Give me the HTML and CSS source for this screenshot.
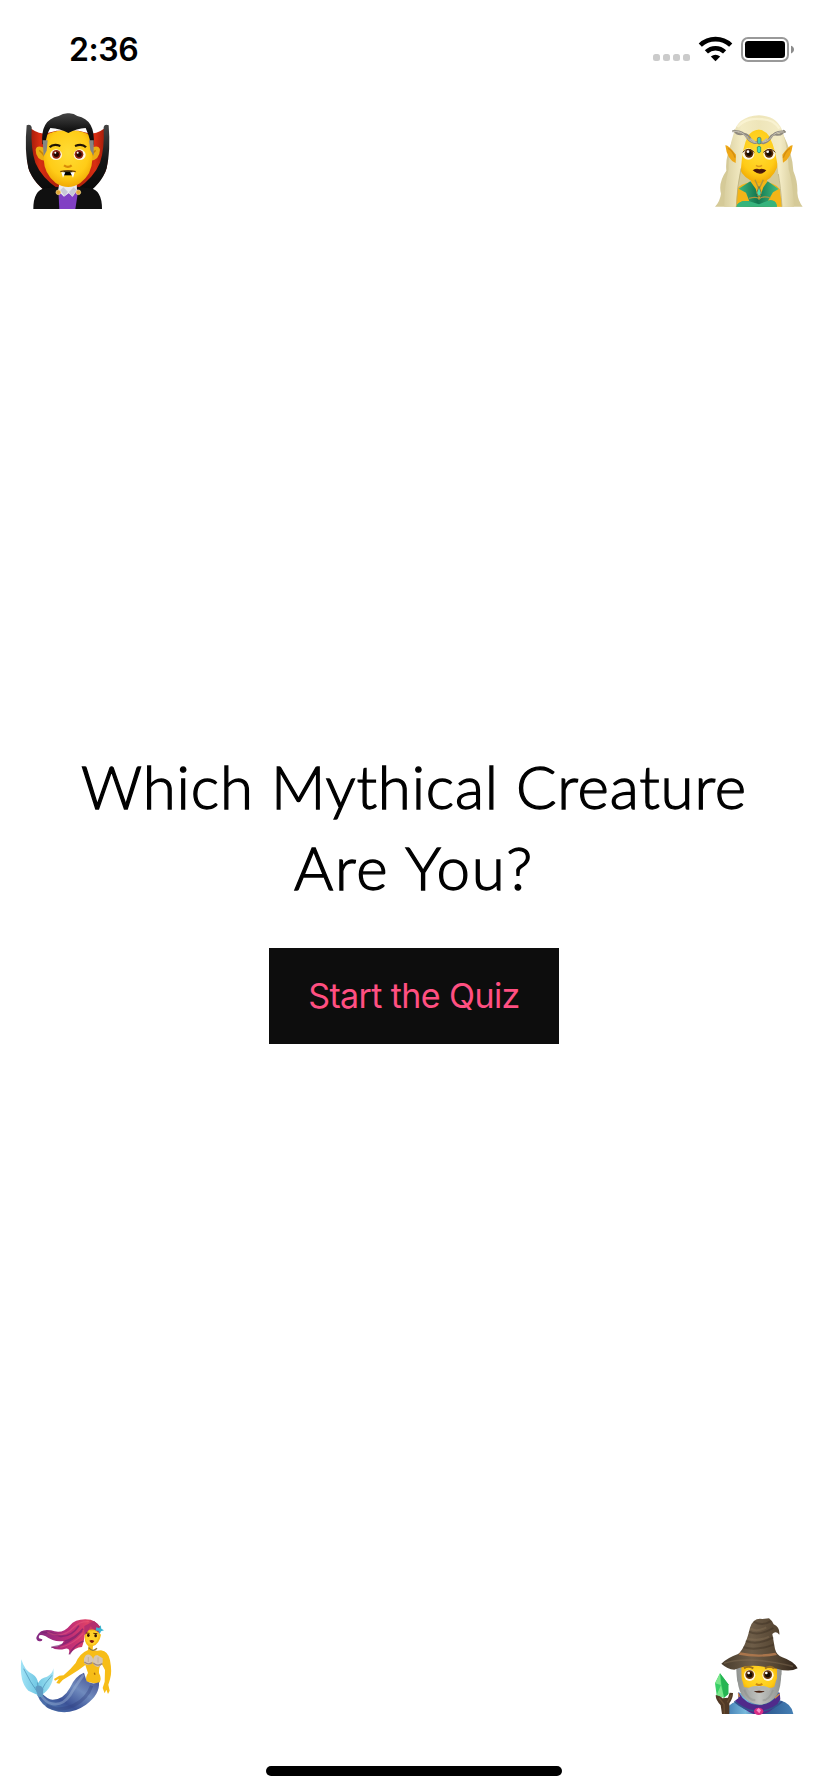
FILE: index.html
```html
<!DOCTYPE html>
<html lang="en">
<head>
<meta charset="utf-8">
<title>Mythical Creature Quiz</title>
<link rel="stylesheet" href="styles.css">
</head>
<body>
<div class="screen">
  <header class="status">
    <time class="clock">2:36</time>
    <svg class="indicators" viewBox="0 0 150 40" aria-hidden="true">
      <g fill="#cbcbcb"><rect x="3" y="24" width="7" height="7" rx="2.5"/><rect x="13" y="24" width="7" height="7" rx="2.5"/><rect x="23" y="24" width="7" height="7" rx="2.5"/><rect x="33" y="24" width="7" height="7" rx="2.5"/></g>
      <g fill="none" stroke="#000" stroke-width="4.6"><path d="M50.3 15.2a22 22 0 0 1 30.4 0"/><path d="M56.4 21.9a13.3 13.3 0 0 1 18.2 0"/></g>
      <path d="M60.8 26.6q4.7-3.8 9.4 0L65.5 31.2z"/>
      <rect x="92" y="8" width="46" height="23" rx="6" fill="#fff" stroke="#999" stroke-width="2"/>
      <rect x="95" y="11" width="40" height="17" rx="3.2"/>
      <path d="M141 15.8q3 1 3 3.8t-3 3.8z" fill="#8c8c8c"/>
    </svg>
  </header>

  <div class="creatures">
    <svg class="creature" viewBox="0 0 360 360" role="img" aria-label="Vampire">
      <defs>
        <linearGradient id="cape" x1="0" x2="1"><stop offset="0" stop-color="#8d1507"/><stop offset=".16" stop-color="#d92e12"/><stop offset=".5" stop-color="#8f1508"/><stop offset=".84" stop-color="#d92e12"/><stop offset="1" stop-color="#8d1507"/></linearGradient>
        <linearGradient id="black" x2="0" y2="1"><stop offset="0" stop-color="#444"/><stop offset=".5" stop-color="#151515"/><stop offset="1" stop-color="#080808"/></linearGradient>
        <radialGradient id="skin" cx=".5" cy=".4" r=".65"><stop offset="0" stop-color="#ffdc35"/><stop offset=".65" stop-color="#ffcc17"/><stop offset="1" stop-color="#eda000"/></radialGradient>
      </defs>
      <path d="M57 77Q68 96 103 101L140 92H205L243 101Q278 96 288 77Q302 175 286 216Q265 257 226 282H119Q78 257 58 213Q43 164 57 77Z" fill="url(#cape)"/>
      <path d="M50 76Q61 71 65 81Q62 148 76 188Q94 232 146 268L128 289Q71 254 55 205Q43 151 50 76ZM296 76Q284 71 281 81Q284 148 270 188Q252 232 200 268L219 289Q275 254 290 205Q302 151 296 76Z" fill="url(#black)"/>
      <path d="M70 327Q70 271 105 265L148 260L160 327ZM276 327Q276 271 241 265L201 260L186 327Z" fill="#101010"/>
      <path d="M145 269L174 258L205 269L196 327H148Z" fill="#8140c4"/>
      <path d="M149 245H200L201 271L188 290L176 280L162 290L144 273Z" fill="#e9e9f0"/>
      <path d="M160 262L174 276L163 289L151 270ZM191 262L177 276L186 290L200 270Z" fill="#c8c8d7"/>
      <path d="M106 145Q80 133 77 149Q77 180 108 183ZM240 145Q266 133 270 149Q269 180 239 183Z" fill="#ecad13"/>
      <path d="M88 151Q98 158 106 174M257 151Q247 158 241 174" fill="none" stroke="#c98200" stroke-width="4"/>
      <path d="M101 126Q101 91 174 91Q246 91 247 126V178Q246 223 211 249Q175 273 137 249Q102 221 101 177Z" fill="url(#skin)"/>
      <path d="M97 133Q90 59 146 48Q160 39 175 40Q191 39 202 48Q257 59 251 134L243 132Q236 103 227 84Q200 86 175 99Q150 86 121 84Q111 99 106 132Z" fill="url(#black)"/>
      <path d="M98 121L113 121L110 152L101 169ZM237 121L251 121V167L241 151Z" fill="#858583"/>
      <path d="M119 142Q130 130 151 138M195 138Q217 130 228 142" fill="none" stroke="#221504" stroke-width="7"/>
      <g><ellipse cx="138" cy="164" rx="18" ry="16" fill="#fff9e5"/><ellipse cx="209" cy="164" rx="18" ry="16" fill="#fff9e5"/><circle cx="139" cy="163" r="13" fill="#8f2414"/><circle cx="207" cy="163" r="13" fill="#8f2414"/><circle cx="139" cy="163" r="8" fill="#210500"/><circle cx="207" cy="163" r="8" fill="#210500"/><circle cx="136" cy="158" r="3" fill="#fff"/><circle cx="203" cy="158" r="3" fill="#fff"/></g>
      <path d="M162 196Q174 205 185 196" fill="none" stroke="#d98b08" stroke-width="7"/>
      <path d="M151 215Q174 209 197 215" fill="none" stroke="#70400b" stroke-width="4"/><path d="M161 214H187V226H161Z"/>
      <path d="M154 217H166L159 233ZM181 217H194L189 233Z" fill="#fff"/>
      <g fill="#e1a738" stroke="#ffdf8a" stroke-width="2"><circle cx="145" cy="277" r="7"/><circle cx="205" cy="277" r="7"/></g>
    </svg>
    <svg class="creature" viewBox="0 0 360 360" role="img" aria-label="Elf">
      <defs>
        <linearGradient id="hair"><stop stop-color="#d9cfa0"/><stop offset=".25" stop-color="#f3ebc3"/><stop offset=".5" stop-color="#eee5b9"/><stop offset=".8" stop-color="#f3ebc5"/><stop offset="1" stop-color="#d8cd9c"/></linearGradient>
        <linearGradient id="green"><stop stop-color="#44bd82"/><stop offset=".5" stop-color="#12764f"/><stop offset="1" stop-color="#44bd82"/></linearGradient>
      </defs>
      <path d="M104 107Q74 168 79 212Q54 248 63 281Q60 304 45 320H308Q294 302 292 279Q294 246 280 213Q277 157 249 103Z" fill="#d5ca98"/>
      <path d="M105 320L111 267Q120 252 153 246L159 221H197L202 247Q236 254 244 277L246 320Z" fill="#f3b417"/>
      <path d="M114 125Q116 90 176 88Q235 92 236 126V184Q228 227 197 243Q177 255 154 243Q117 224 114 183Z" fill="url(#skin)"/>
      <path d="M177 88Q155 92 144 108Q127 140 123 205Q111 260 108 320H73Q72 260 86 207Q84 151 100 104Q111 49 177 46Q236 47 250 102Q264 149 266 208Q279 250 282 320H246L235 222Q230 150 207 108Q196 92 177 88Z" fill="url(#hair)"/>
      <path d="M108 164Q83 133 76 136Q81 179 107 189ZM247 164Q270 133 278 136Q273 177 249 188Z" fill="#eea817"/>
      <path d="M84 145Q99 151 105 173M270 145Q257 151 250 173" fill="none" stroke="#d38d12" stroke-width="4"/>
      <path d="M112 81Q137 54 177 57Q221 56 238 86" fill="none" stroke="#fff9df" stroke-width="7" opacity=".55"/>
      <path d="M123 205Q111 260 109 320M235 222Q242 260 246 320" fill="none" stroke="#b5a978" stroke-width="3" opacity=".7"/>
      <path d="M116 266L151 244L167 266L177 300L190 262L203 244L236 267L219 277L204 302Q228 297 231 320H109Q116 300 148 304L138 278Z" fill="url(#green)"/>
      <path d="M109 320Q116 300 148 304L177 313L204 302Q228 297 231 320Z" fill="#36b47c"/>
      <path d="M165 239L177 267L190 239M147 295Q171 288 177 297Q190 286 211 294" fill="none" stroke="#aa9541" stroke-width="4"/>
      <path d="M177 259L184 279L177 291L170 279Z" fill="#4de1ad" stroke="#877b43" stroke-width="3"/>
      <g fill="none" stroke="#8f8a7f" stroke-width="6"><path d="M97 94Q126 89 142 114Q155 133 174 126Q198 132 211 115Q226 90 257 96"/><path d="M102 90Q112 108 132 101Q147 102 155 123Q166 137 177 119Q189 139 205 121Q214 100 231 104Q249 105 252 90"/></g>
      <path d="M99 94Q126 91 142 114Q157 131 174 126M182 126Q204 127 213 112Q229 92 252 96" fill="none" stroke="#c5c0b4" stroke-width="3"/>
      <path d="M151 116L165 126M202 116L189 126" stroke="#bdb9af" stroke-width="5"/>
      <rect x="172" y="112" width="11" height="20" rx="5" fill="#47cbb0" stroke="#686452" stroke-width="2"/><path d="M172 141Q177 136 182 141V155Q177 163 172 155Z" fill="#48ddb1" stroke="#178068" stroke-width="2"/>
      <ellipse cx="145" cy="162" rx="18" ry="17" fill="#fff8df"/><ellipse cx="208" cy="162" rx="18" ry="17" fill="#fff8df"/>
      <circle cx="147" cy="160" r="13" fill="#5a2c08"/><circle cx="207" cy="160" r="13" fill="#5a2c08"/><circle cx="147" cy="160" r="8" fill="#170b00"/><circle cx="207" cy="160" r="8" fill="#170b00"/><circle cx="144" cy="155" r="4" fill="#fff"/><circle cx="203" cy="155" r="4" fill="#fff"/>
      <path d="M128 157Q144 139 163 157M190 157Q211 139 226 157" fill="none" stroke="#4d2b08" stroke-width="3"/>
      <path d="M168 196Q177 203 186 196" fill="none" stroke="#dc981b" stroke-width="5"/>
      <path d="M158 211Q169 204 178 208Q187 204 199 211Q181 231 158 211Z" fill="#511c0e"/><path d="M163 213H194" stroke="#260a06" stroke-width="2"/>
    </svg>
  </div>

  <main class="intro">
    <h1 class="title"><span class="line line-first">Which Mythical Creature</span> <span class="line line-second">Are You?</span></h1>
    <button class="start" type="button"><span class="start-label">Start the Quiz</span></button>
  </main>

  <div class="creatures">
    <svg class="creature" viewBox="0 0 360 360" role="img" aria-label="Mermaid">
      <defs>
        <linearGradient id="mermaid-hair"><stop stop-color="#832a83"/><stop offset=".5" stop-color="#bd2d78"/><stop offset=".8" stop-color="#df4166"/><stop offset="1" stop-color="#922665"/></linearGradient>
        <linearGradient id="tail" x1="0" y1="1" x2="1" y2="0"><stop stop-color="#5888bb"/><stop offset=".35" stop-color="#3b5297"/><stop offset=".62" stop-color="#6f8abd"/><stop offset="1" stop-color="#3c4387"/></linearGradient>
        <linearGradient id="fin"><stop stop-color="#a1e3f6"/><stop offset=".5" stop-color="#72c8e4"/><stop offset="1" stop-color="#a2e3f3"/></linearGradient>
      </defs>
      <path d="M83 107Q76 101 81 93Q91 70 123 76Q158 89 179 62Q199 38 242 44Q269 52 272 77L253 89L225 78Q223 108 216 126Q195 127 176 149Q183 128 166 131Q139 138 123 126Q156 127 161 108Q133 113 107 94Q83 83 87 100L97 103Q98 112 83 107Z" fill="url(#mermaid-hair)"/>
      <path d="M94 82Q125 81 151 94Q185 96 207 62M124 127Q178 119 216 78M164 109Q197 98 219 71M178 148Q194 118 221 108" fill="none" stroke="#75206d" stroke-width="5" opacity=".65"/>
      <path d="M112 82Q158 103 192 66Q210 48 237 50M151 127Q188 119 220 85" fill="none" stroke="#f06382" stroke-width="4" opacity=".4"/>
      <path d="M225 84Q239 68 261 77L273 89Q268 117 249 123L248 134Q256 139 273 136Q295 139 300 166Q307 202 300 223L295 239L299 257L294 267L289 254L284 265L278 249L284 230L285 195L275 176Q266 185 267 204Q279 226 264 237L229 230Q225 218 234 204L226 180Q206 196 181 211L158 225L148 236L139 234L147 221L135 227L132 222L148 212L161 211Q181 194 197 174Q209 145 234 135L235 124Q220 110 225 84Z" fill="#f7bd17"/>
      <path d="M230 84Q247 72 266 84Q266 108 250 119Q233 121 226 101Z" fill="#ffd22a"/>
      <path d="M223 91Q233 83 242 64Q256 76 269 85L272 66L252 48L223 63Z" fill="#b42f6e"/>
      <path d="M259 67L268 70L272 60L274 71L282 76L273 79L269 87L265 77L257 77Z" fill="#38b4cf"/>
      <ellipse cx="235" cy="91" rx="4" ry="5" fill="#371505"/><ellipse cx="257" cy="92" rx="4" ry="5" fill="#371505"/><path d="M228 84L239 85M250 85L262 86" stroke="#5d3000" stroke-width="3"/><path d="M238 107Q245 103 253 108Q246 120 238 107Z" fill="#84180e"/>
      <path d="M236 128Q248 143 261 130" fill="none" stroke="#91793a" stroke-width="4"/>
      <path d="M222 161Q227 145 239 149Q253 157 248 172Q235 186 222 174ZM249 171Q248 151 262 150L278 160Q281 183 263 186Q250 183 249 171Z" fill="#d6c6b4"/><path d="M223 171Q234 181 247 173M250 174Q262 186 277 176" fill="none" stroke="#a18b7c" stroke-width="4"/><path d="M235 156V171M264 157V173" stroke="#b8a391" stroke-width="2"/>
      <path d="M222 203Q195 213 180 248Q161 283 128 284Q113 284 91 260L82 270Q94 303 127 315Q178 334 228 299Q270 269 267 232Q248 240 230 229Z" fill="url(#tail)"/>
      <path d="M221 209Q190 252 180 271Q157 304 125 296Q106 292 92 269" fill="none" stroke="#a8bddb" stroke-width="8" opacity=".4"/><path d="M245 242Q232 280 192 301Q146 323 109 301" fill="none" stroke="#334080" stroke-width="10" opacity=".4"/>
      <path d="M34 163Q43 197 68 208Q83 218 84 235Q91 219 111 215Q128 207 130 190Q136 245 91 273Q74 266 55 257Q27 232 34 163Z" fill="url(#fin)"/><path d="M41 191Q61 233 83 262M126 211Q104 233 90 264M83 232L85 265" fill="none" stroke="#4489b0" stroke-width="3" opacity=".65"/>
      <path d="M76 246Q90 235 100 251L98 277L84 275Z" fill="#5e9ac2"/><path d="M253 203L255 209" stroke="#a86609" stroke-width="4"/>
    </svg>
    <svg class="creature" viewBox="0 0 360 360" role="img" aria-label="Mage">
      <defs>
        <linearGradient id="hat"><stop stop-color="#463b2c"/><stop offset=".4" stop-color="#6e5d48"/><stop offset=".72" stop-color="#554532"/><stop offset="1" stop-color="#302319"/></linearGradient>
        <linearGradient id="robe"><stop stop-color="#3e78af"/><stop offset=".3" stop-color="#78b9dc"/><stop offset=".55" stop-color="#2a558c"/><stop offset="1" stop-color="#4680b5"/></linearGradient>
        <linearGradient id="beard"><stop stop-color="#909390"/><stop offset=".5" stop-color="#c1c3c0"/><stop offset="1" stop-color="#909390"/></linearGradient>
      </defs>
      <path d="M75 327Q78 297 116 287V261L157 284H200L237 261L239 286Q275 295 280 327Z" fill="url(#robe)"/>
      <path d="M115 261Q137 299 176 301Q217 300 239 262L241 283Q226 316 191 327H161Q131 315 105 287L115 280Z" fill="#502a8b"/>
      <path d="M103 289Q132 314 162 318M191 318Q221 312 247 289" fill="none" stroke="#31538e" stroke-width="5"/>
      <path d="M115 265L118 276M239 266L224 280" fill="none" stroke="#d69145" stroke-width="4"/>
      <path d="M108 179H133V260Q110 240 110 212ZM223 179H246Q248 225 221 258Z" fill="url(#beard)"/>
      <path d="M124 179H231V236Q215 267 176 270Q136 267 125 236Z" fill="url(#skin)"/>
      <path d="M111 205Q124 208 132 246Q149 251 161 245Q177 240 194 245Q208 252 223 245Q232 208 244 205Q243 250 231 270Q210 299 178 299Q146 296 125 270Q112 248 111 205Z" fill="url(#beard)"/>
      <path d="M133 254Q143 285 166 286M219 255Q207 287 188 286" fill="none" stroke="#828582" stroke-width="6" opacity=".35"/>
      <path d="M64 176Q83 158 114 147Q135 131 150 68Q160 37 187 42L207 40Q218 48 221 58Q240 66 238 89Q227 76 217 87L225 132Q230 151 247 157Q282 169 293 190Q269 203 231 191L176 183Q139 179 103 194Q82 192 64 176Z" fill="url(#hat)"/>
      <path d="M121 142Q173 154 226 143L231 150Q174 161 116 149Z" fill="#a9754c"/>
      <path d="M147 80Q176 95 220 69M137 108Q174 122 220 97M130 127Q171 138 221 119M161 50Q187 65 211 49" fill="none" stroke="#302519" stroke-width="6" opacity=".35"/><path d="M151 71Q171 82 199 67M142 101Q181 109 207 95" fill="none" stroke="#947e61" stroke-width="6" opacity=".3"/>
      <path d="M72 175Q144 151 279 184" fill="none" stroke="#8b765a" stroke-width="5" opacity=".4"/>
      <path d="M132 190Q144 181 160 190M195 190Q210 181 222 190" fill="none" stroke="#9b701f" stroke-width="6"/>
      <circle cx="149" cy="211" r="17" fill="#fff7df"/><circle cx="204" cy="211" r="17" fill="#fff7df"/><circle cx="149" cy="209" r="13" fill="#64320c"/><circle cx="203" cy="209" r="13" fill="#64320c"/><circle cx="149" cy="209" r="8" fill="#160b02"/><circle cx="203" cy="209" r="8" fill="#160b02"/><circle cx="146" cy="204" r="4" fill="#fff"/><circle cx="199" cy="204" r="4" fill="#fff"/>
      <path d="M168 236Q177 244 187 236" fill="none" stroke="#cd8910" stroke-width="6"/><path d="M146 256Q162 242 177 253Q191 242 209 256" fill="none" stroke="#b3b5b1" stroke-width="10"/><path d="M161 259Q177 255 194 259Q178 268 161 259Z" fill="#492212"/>
      <path d="M66 327L62 301Q47 285 47 271L58 269L67 280L84 278L89 263L99 264Q99 280 88 295V327Z" fill="#513925"/><path d="M57 279L72 298L73 326M94 270L82 292" fill="none" stroke="#7a5a3a" stroke-width="4" opacity=".6"/>
      <path d="M60 205L45 235L50 270L72 278L85 267V238Z" fill="#39cf66"/><path d="M60 205L65 238L72 278L85 267V238Z" fill="#26b553"/><path d="M60 205L45 235L63 240ZM50 270L63 240L72 278Z" fill="#7ae68b"/>
      <ellipse cx="176" cy="319" rx="14" ry="11" fill="#d62d83"/><path d="M169 316L176 309L183 316L178 325Z" fill="#ff91ca"/>
    </svg>
  </div>
  <footer class="home"><span class="home-bar"></span></footer>
</div>
</body>
</html>
```
FILE: styles.css
```css
* { box-sizing: border-box; }
body { margin: 0; background: #fff; color: #000; }
.screen { width: 828px; height: 1792px; display: flex; flex-direction: column; overflow: hidden; }
.status { height: 100px; padding: 30px 28px 0 69px; display: flex; justify-content: space-between; align-items: flex-start; }
.clock { font: 600 32px/40px Inter, sans-serif; letter-spacing: -.4px; }
.indicators { width: 150px; height: 40px; }
.creatures { height: 120px; padding: 0 8px 0 10px; display: flex; justify-content: space-between; }
.creature { width: 120px; height: 120px; overflow: hidden; }
.intro { height: 1385px; padding-top: 526px; display: flex; flex-direction: column; align-items: center; }
.title { margin: 0; font: 300 60px/81px Lato, sans-serif; text-align: center; -webkit-text-stroke: 1.3px #000; }
.line { display: block; white-space: nowrap; }
.line-first { letter-spacing: .84px; }
.line-second { letter-spacing: 1.8px; }
.start { width: 290px; height: 96px; margin: 40px 0 0; padding: 0; border: 0; border-radius: 0; background: #0d0d0d; color: #ff4f81; font: 400 34px/96px Inter, sans-serif; }
.start-label { display: block; letter-spacing: -.6px; white-space: nowrap; }
.home { flex: 1; display: flex; justify-content: center; align-items: flex-end; padding-bottom: 16px; }
.home-bar { width: 296px; height: 10px; border-radius: 5px; background: #000; }
```
